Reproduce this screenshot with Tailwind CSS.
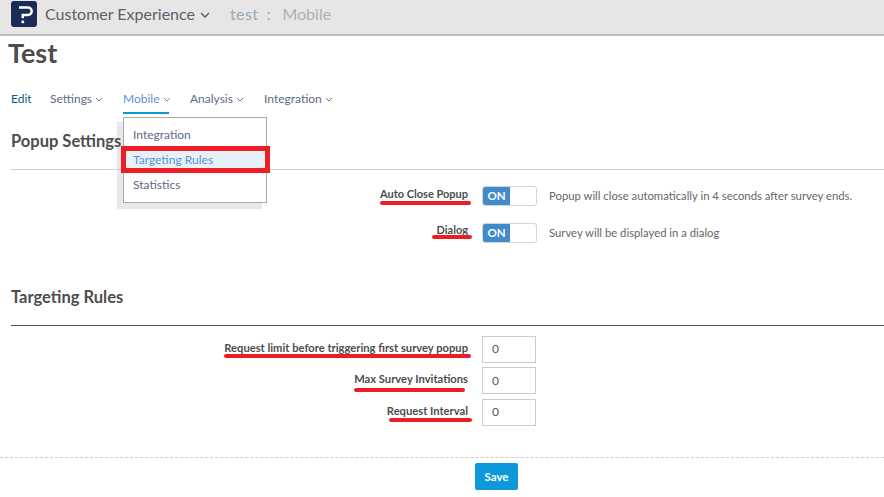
<!doctype html>
<html>
<head>
  <meta charset="UTF-8">
  <title>Test</title>
  <script src="https://cdn.jsdelivr.net/npm/@tailwindcss/browser@4"></script>
</head>
<body class="h-screen overflow-hidden bg-white font-['Lato',sans-serif] text-[#555]">
  <!-- dropdown shadow, sits under the page text -->
  <div class="absolute left-[117px] top-[122px] w-[145px] h-[87px] bg-[#e8e8e8]"></div>

  <!-- top bar -->
  <header class="relative h-[36px] bg-[#e6e6e6] border-b-2 border-[#bdbdbd] flex items-center pl-[11px] pb-[7px]">
    <svg width="26" height="26" viewBox="0 0 26 26" class="shrink-0">
      <rect width="26" height="26" rx="3" fill="#1b2a57"/>
      <path d="M8 6.5h9a3.7 3.7 0 0 1 0 7.4h-5.2v3.4" fill="none" stroke="#fff" stroke-width="2.5"/>
      <rect x="10.5" y="19.6" width="2.6" height="2.6" fill="#fff"/>
    </svg>
    <span class="ml-[8px] text-[16px] text-[#5b5f6b]">Customer Experience</span>
    <svg width="10" height="6" viewBox="0 0 10 6" class="ml-[5px] mt-[2px]"><path d="M1 1l4 4 4-4" fill="none" stroke="#555" stroke-width="1.3"/></svg>
    <span class="ml-[20px] text-[16px] text-[#9aa7b8] tracking-[0.4px]">test</span>
    <span class="ml-[8px] text-[16px] text-[#9aa7b8]">:</span>
    <span class="ml-[12px] text-[16px] text-[#b0b0b0]">Mobile</span>
  </header>

  <main class="relative">
    <h1 class="ml-[8px] text-[27px] leading-[34px] font-bold text-[#4d4d4d]">Test</h1>

    <!-- tabs -->
    <nav class="flex h-[46px] ml-[11px] mt-[10px] text-[12px] text-[#5d6a85]">
      <a class="w-[39px] pt-[10px] text-[#0b5a86]">Edit</a>
      <a class="w-[73px] pt-[10px] flex items-start gap-[3px]">Settings
        <svg width="8" height="5" viewBox="0 0 8 5" class="mt-[7px] shrink-0"><path d="M1 1l3 3 3-3" fill="none" stroke="#777"/></svg></a>
      <a class="w-[46px] h-[34px] pt-[10px] flex items-start gap-[3px] text-[#5b93cf] border-b-2 border-[#0d98da]">Mobile
        <svg width="8" height="5" viewBox="0 0 8 5" class="mt-[7px] shrink-0"><path d="M1 1l3 3 3-3" fill="none" stroke="#5b93cf"/></svg></a>
      <a class="ml-[21px] w-[74px] pt-[10px] flex items-start gap-[3px]">Analysis
        <svg width="8" height="5" viewBox="0 0 8 5" class="mt-[7px] shrink-0"><path d="M1 1l3 3 3-3" fill="none" stroke="#777"/></svg></a>
      <a class="pt-[10px] flex items-start gap-[3px]">Integration
        <svg width="8" height="5" viewBox="0 0 8 5" class="mt-[7px] shrink-0"><path d="M1 1l3 3 3-3" fill="none" stroke="#777"/></svg></a>
    </nav>

    <!-- popup settings -->
    <h2 class="ml-[11px] mt-[3px] text-[16.5px] leading-[24px] font-bold text-[#4d4d4d]">Popup Settings</h2>
    <div class="ml-[11px] mt-[16px] border-t border-[#cfcfcf]"></div>

    <div class="mt-[16px] flex items-center h-[20px]">
      <label class="w-[468px] text-right text-[11px] font-bold text-[#4d4d4d] -mt-[3px]">Auto Close Popup</label>
      <div class="ml-[14px] w-[55px] h-[20px] flex border border-[#d5d5d5] rounded-[3px] overflow-hidden">
        <span class="w-[27px] bg-[#428bca] text-white text-[11.5px] font-bold text-center leading-[18px]">ON</span>
      </div>
      <span class="ml-[12px] text-[11.3px] text-[#666]">Popup will close automatically in 4 seconds after survey ends.</span>
    </div>
    <div class="mt-[17px] flex items-center h-[20px]">
      <label class="w-[468px] text-right text-[11px] font-bold text-[#4d4d4d] -mt-[6px]">Dialog</label>
      <div class="ml-[14px] w-[55px] h-[20px] flex border border-[#d5d5d5] rounded-[3px] overflow-hidden">
        <span class="w-[27px] bg-[#428bca] text-white text-[11.5px] font-bold text-center leading-[18px]">ON</span>
      </div>
      <span class="ml-[12px] text-[11.3px] text-[#666]">Survey will be displayed in a dialog</span>
    </div>

    <!-- targeting rules -->
    <h2 class="ml-[11px] mt-[42px] text-[16.5px] leading-[24px] font-bold text-[#4d4d4d]">Targeting Rules</h2>
    <div class="ml-[11px] mt-[16px] border-t border-[#555]"></div>

    <div class="mt-[10px] flex flex-col gap-[4px]">
      <div class="flex items-center h-[27px]">
        <label class="w-[468px] text-right text-[11.2px] font-bold text-[#4d4d4d] -mt-[2px]">Request limit before triggering first survey popup</label>
        <div class="ml-[14px] w-[54px] h-[27px] border border-[#ccc] pl-[9px] text-[12px] leading-[24px]">0</div>
      </div>
      <div class="flex items-center h-[27px]">
        <label class="w-[468px] text-right text-[11.2px] font-bold text-[#4d4d4d] -mt-[2px]">Max Survey Invitations</label>
        <div class="ml-[14px] w-[54px] h-[27px] border border-[#ccc] pl-[9px] text-[12px] leading-[25px]">0</div>
      </div>
      <div class="flex items-center h-[27px] mt-[1px]">
        <label class="w-[468px] text-right text-[11.2px] font-bold text-[#4d4d4d] -mt-[2px]">Request Interval</label>
        <div class="ml-[14px] w-[54px] h-[27px] border border-[#ccc] pl-[9px] text-[12px] leading-[24px]">0</div>
      </div>
    </div>

    <div class="mt-[31px] border-t border-dashed border-[#ccc]"></div>
    <button class="block ml-[475px] mt-[5px] w-[43px] h-[27px] bg-[#0d98da] text-white text-[11.5px] font-bold rounded-[2px]">Save</button>
  </main>

  <!-- open dropdown, drawn over the page -->
  <div class="absolute left-[123px] top-[117px] w-[144px] h-[86px] bg-white border border-[#aaa] pt-[4px] text-[12px] text-[#5d6a85]">
    <div class="h-[25px] pl-[9px] leading-[25px]">Integration</div>
    <div class="h-[25px] pl-[9px] leading-[25px] bg-[#e5f1f7] text-[#5b93cf]">Targeting Rules</div>
    <div class="h-[25px] pl-[9px] leading-[25px]">Statistics</div>
  </div>

  <!-- red annotations -->
  <div class="absolute left-[121px] top-[146px] w-[149px] h-[27px] border-[5px] border-[#ee1c25]"></div>
  <div class="absolute left-[380px] top-[201px] w-[91px] h-[4px] rounded-full bg-[#ee1c25]"></div>
  <div class="absolute left-[432px] top-[235px] w-[40px] h-[4px] rounded-full bg-[#ee1c25]"></div>
  <div class="absolute left-[224px] top-[354px] w-[247px] h-[4px] rounded-full bg-[#ee1c25]"></div>
  <div class="absolute left-[354px] top-[388px] w-[111px] h-[4px] rounded-full bg-[#ee1c25]"></div>
  <div class="absolute left-[389px] top-[418px] w-[83px] h-[4px] rounded-full bg-[#ee1c25]"></div>
</body>
</html>
